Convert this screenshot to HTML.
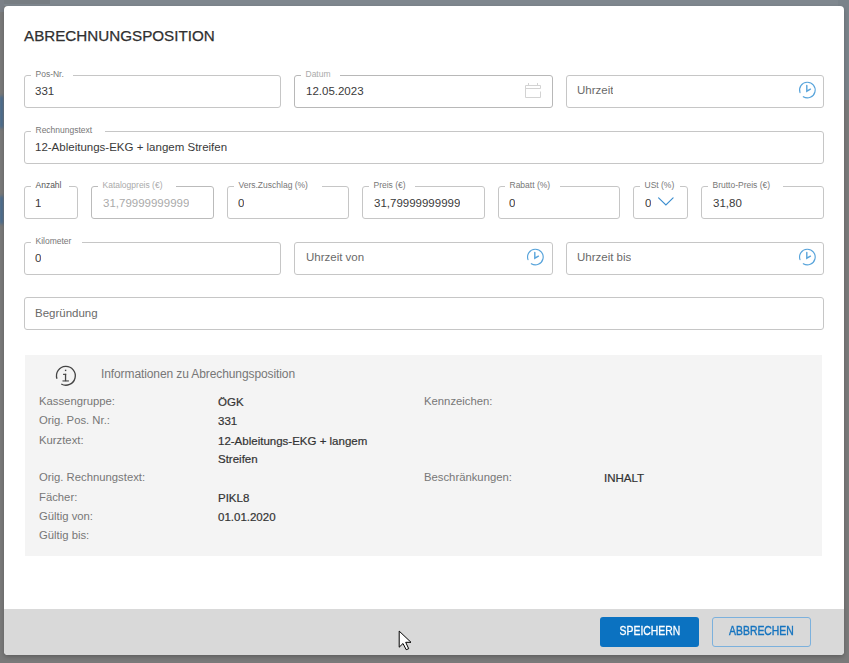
<!DOCTYPE html>
<html><head><meta charset="utf-8">
<style>
*{box-sizing:border-box;margin:0;padding:0}
html,body{width:849px;height:663px;overflow:hidden}
body{position:relative;font-family:"Liberation Sans",sans-serif;background:#7a7a7a}
.bg{position:absolute}
.modal{position:absolute;left:4px;top:6px;width:840px;height:649px;background:#fff;border-radius:4px;overflow:hidden;box-shadow:0 2px 4px rgba(0,0,0,.22)}
.footer{position:absolute;left:4px;top:609px;width:840px;height:46px;background:#d9d9d9;border-radius:0 0 4px 4px}
.title{position:absolute;left:24px;top:26.7px;font-size:15.2px;color:#303030;white-space:nowrap;-webkit-text-stroke:0.25px #303030}
.f{position:absolute;height:33px;border:1px solid #c6c6c6;border-radius:3px;background:#fff}
.lab{position:absolute;top:-7px;left:6px;font-size:8.5px;line-height:10px;color:#777;background:#fff;padding:0 9px 0 4.5px;white-space:nowrap}
.val{position:absolute;left:10px;top:8.2px;font-size:11.5px;line-height:14px;color:#3a3a3a;white-space:nowrap;overflow:hidden}
.ph{color:#6a6a6a}
.info{position:absolute;left:25px;top:355px;width:797px;height:201px;background:#f4f4f4}
.il{position:absolute;font-size:11.3px;line-height:14px;color:#777;white-space:nowrap}
.iv{position:absolute;font-size:11.5px;line-height:14px;color:#333;white-space:nowrap;-webkit-text-stroke:0.2px #333}
.btn{position:absolute;top:617px;height:30px;border-radius:3px;font-size:13px;text-align:center;line-height:29px;white-space:nowrap}
.btn span{display:inline-block;transform:scaleX(0.8);-webkit-text-stroke:0.3px currentColor;position:relative;top:-1px}
svg{position:absolute;overflow:visible}
</style></head><body>
<div class="bg" style="left:0;top:0;width:849px;height:6px;background:#7f878e"></div>
<div class="bg" style="left:0;top:0;width:50px;height:4px;background:#777d82"></div>
<div class="bg" style="left:838px;top:0;width:11px;height:100px;background:#7a838a"></div>
<div class="bg" style="left:0;top:0;width:4px;height:12px;background:#7b8087"></div>
<div class="bg" style="left:0;top:96px;width:3px;height:32px;background:#3d6b97;filter:blur(1.5px)"></div>
<div class="bg" style="left:0;top:196px;width:3px;height:28px;background:#3d6b97;filter:blur(1.5px)"></div>
<div class="modal"></div>
<div class="footer"></div>
<div class="title">ABRECHNUNGSPOSITION</div>

<!-- row 1 -->
<div class="f" style="left:24px;top:75px;width:257px"><span class="lab">Pos-Nr.</span><span class="val">331</span></div>
<div class="f" style="left:294px;top:75px;width:259px;border-color:#b8b8b8"><span class="lab" style="color:#aaa;padding-right:9px">Datum</span><span class="val" style="left:11px">12.05.2023</span></div>
<div class="f" style="left:566px;top:75px;width:258px"><span class="val ph" style="top:7px">Uhrzeit</span></div>

<!-- row 2 -->
<div class="f" style="left:24px;top:131px;width:800px"><span class="lab" style="padding-right:13px">Rechnungstext</span><span class="val">12-Ableitungs-EKG + langem Streifen</span></div>

<!-- row 3 -->
<div class="f" style="left:24px;top:186px;width:54px"><span class="lab" style="color:#555;padding-right:7.5px">Anzahl</span><span class="val" style="top:9px">1</span></div>
<div class="f" style="left:91px;top:186px;width:123px;border-color:#bbb"><span class="lab" style="color:#aaa;padding-right:13.5px">Katalogpreis (€)</span><span class="val" style="top:9px;color:#aaa;width:85.5px;left:11px">31,79999999999</span></div>
<div class="f" style="left:227px;top:186px;width:122px"><span class="lab" style="padding-right:14px">Vers.Zuschlag (%)</span><span class="val" style="top:9px">0</span></div>
<div class="f" style="left:362px;top:186px;width:123px"><span class="lab">Preis (€)</span><span class="val" style="top:9px;width:85.5px;left:11px">31,79999999999</span></div>
<div class="f" style="left:498px;top:186px;width:122px"><span class="lab" style="padding-right:9.5px">Rabatt (%)</span><span class="val" style="top:9px">0</span></div>
<div class="f" style="left:633px;top:186px;width:55px"><span class="lab" style="padding-right:6px">USt (%)</span><span class="val" style="top:9px;left:11px">0</span></div>
<div class="f" style="left:701px;top:186px;width:123px"><span class="lab" style="padding-right:12.5px">Brutto-Preis (€)</span><span class="val" style="top:9px;left:11px">31,80</span></div>

<!-- row 4 -->
<div class="f" style="left:24px;top:242px;width:257px"><span class="lab" style="padding-right:10.5px">Kilometer</span><span class="val">0</span></div>
<div class="f" style="left:294px;top:242px;width:259px"><span class="val ph" style="top:7px;left:11px">Uhrzeit von</span></div>
<div class="f" style="left:566px;top:242px;width:258px"><span class="val ph" style="top:7px">Uhrzeit bis</span></div>

<!-- row 5 -->
<div class="f" style="left:24px;top:297px;width:800px"><span class="val ph">Begründung</span></div>

<div class="info"></div>
<!-- icons -->
<svg style="left:0;top:0" width="849" height="663" viewBox="0 0 849 663">
  <g fill="none" stroke="#d3d3d3" stroke-width="1">
    <path d="M540.5 91.5 V97.5 H525.5 V85.5 H540.5 V88.5 H525.5"/>
    <path d="M528.5 83 V85.5 M537.5 83 V85.5"/>
  </g>
  <g fill="none" stroke="#58a4db" stroke-width="1.15" stroke-linecap="round">
    <path d="M800 92.6 A7.8 7.8 0 1 1 803.3 96.7"/>
    <path d="M806.8 85.5 V91.2 L810.4 89.2" stroke-width="1.4"/>
    <path d="M800 259.6 A7.8 7.8 0 1 1 803.3 263.7" transform="translate(-272 0)"/>
    <path d="M806.8 252.5 V258.2 L810.4 256.2" stroke-width="1.4" transform="translate(-272 0)"/>
    <path d="M800 259.6 A7.8 7.8 0 1 1 803.3 263.7"/>
    <path d="M806.8 252.5 V258.2 L810.4 256.2" stroke-width="1.4"/>
    <path d="M658.6 197.9 L665.9 204.9 L673.1 197.8" stroke-width="1.15" stroke="#3a8dcf"/>
  </g>
  <g fill="none" stroke="#444" stroke-width="1.3">
    <path d="M56.97 378.74 A9.4 9.4 0 1 1 61.26 383.98"/>
  </g>
  <g fill="#444">
    <rect x="64.9" y="369.7" width="1.4" height="1.4"/>
    <rect x="63" y="373.8" width="3.2" height="1.1"/>
    <rect x="64.9" y="373.8" width="1.3" height="7.4"/>
    <rect x="62.5" y="380.4" width="6.4" height="1.1"/>
  </g>
</svg>

<!-- info -->
<div class="il" style="left:101px;top:367px;font-size:12px;letter-spacing:-0.1px">Informationen zu Abrechungsposition</div>
<div class="il" style="left:39px;top:394px">Kassengruppe:</div>
<div class="il" style="left:39px;top:413.3px">Orig. Pos. Nr.:</div>
<div class="il" style="left:39px;top:432.6px">Kurztext:</div>
<div class="il" style="left:39px;top:470.2px">Orig. Rechnungstext:</div>
<div class="il" style="left:39px;top:489.5px">Fächer:</div>
<div class="il" style="left:39px;top:508.8px">Gültig von:</div>
<div class="il" style="left:39px;top:528px">Gültig bis:</div>
<div class="iv" style="left:218px;top:395px">ÖGK</div>
<div class="iv" style="left:218px;top:414.3px">331</div>
<div class="iv" style="left:218px;top:433.6px">12-Ableitungs-EKG + langem</div>
<div class="iv" style="left:218px;top:452.4px">Streifen</div>
<div class="iv" style="left:218px;top:490.5px">PIKL8</div>
<div class="iv" style="left:218px;top:509.8px">01.01.2020</div>
<div class="il" style="left:424px;top:394px">Kennzeichen:</div>
<div class="il" style="left:424px;top:470.2px">Beschränkungen:</div>
<div class="iv" style="left:604px;top:471.2px">INHALT</div>

<!-- buttons -->
<div class="btn" style="left:600px;width:99px;background:#0b72c1;color:#fff"><span>SPEICHERN</span></div>
<div class="btn" style="left:712px;width:99px;border:1px solid #7cb1dd;color:#1473bf;line-height:27px"><span style="-webkit-text-stroke:0.4px #1473bf">ABBRECHEN</span></div>

<!-- cursor -->
<svg style="left:0;top:0" width="849" height="663" viewBox="0 0 849 663">
  <path d="M399.2 631.1 V647.2 L403 643.5 L406.2 649.7 L408.7 648.7 L405.7 642.3 L411 642.3 Z" fill="#fff" stroke="#000" stroke-width="1" stroke-linejoin="miter"/>
</svg>
</body></html>
